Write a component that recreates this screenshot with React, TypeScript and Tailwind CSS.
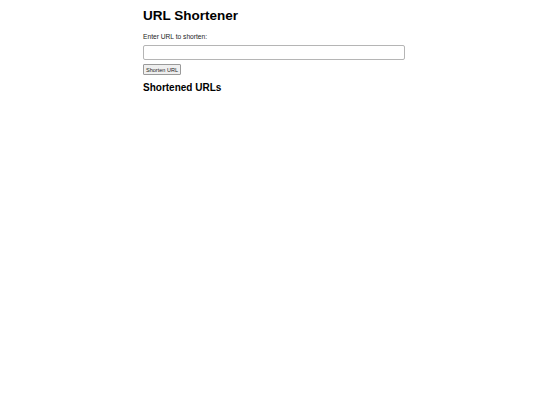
import React from "react";

export default function App() {
  return (
    <div className="min-h-[405px] w-[540px] bg-white text-black" style={{ fontFamily: '"Liberation Sans", Arial, sans-serif' }}>
      <div className="ml-[143px] w-[262px] flex flex-col pt-[8px]">
        <h1 className="text-[13.5px] font-bold leading-[16px] m-0">URL Shortener</h1>
        <label className="text-[6.67px] leading-[8px] mt-[9px] text-[#222]">Enter URL to shorten:</label>
        <input
          type="text"
          className="mt-[4px] h-[15px] w-[262px] border border-[#b5b5b5] rounded-[2px] bg-white outline-none"
        />
        <div className="mt-[4px] flex">
          <button className="text-[5.56px] leading-[6px] px-[2px] py-[1.5px] border border-[#9a9a9a] rounded-[1px] bg-[#efefef] text-[#222]">
            Shorten URL
          </button>
        </div>
        <h2 className="text-[10px] font-bold leading-[12px] mt-[7px]">Shortened URLs</h2>
      </div>
    </div>
  );
}
